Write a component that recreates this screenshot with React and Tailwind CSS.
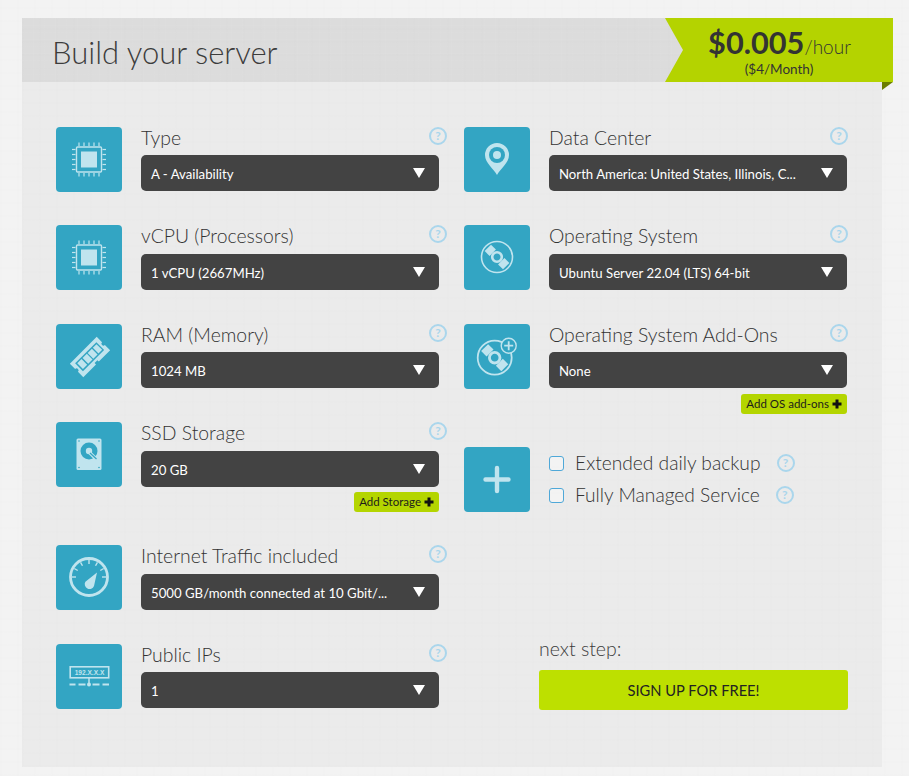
const linen = 'bg-[repeating-linear-gradient(0deg,rgba(255,255,255,0.022)_0_1px,transparent_1px_7px),repeating-linear-gradient(90deg,rgba(255,255,255,0.022)_0_1px,transparent_1px_11px),repeating-linear-gradient(0deg,rgba(0,0,0,0.004)_0_2px,transparent_2px_13px),repeating-linear-gradient(90deg,rgba(0,0,0,0.004)_0_2px,transparent_2px_17px)]'

const LIGHT = '#c0e4ee'
const TILE = '#33a5c3'

function CpuIcon() {
  const ticks = [-10, -5, 0, 5, 10]
  return (
    <>
      {ticks.map((t) => (
        <g key={t} stroke={LIGHT} strokeWidth="1.2">
          <line x1={33 + t} y1="15.5" x2={33 + t} y2="19" />
          <line x1={33 + t} y1="46" x2={33 + t} y2="49.5" />
          <line x1="16" y1={32.5 + t} x2="19.5" y2={32.5 + t} />
          <line x1="46.5" y1={32.5 + t} x2="50" y2={32.5 + t} />
        </g>
      ))}
      <rect x="20.5" y="20" width="25" height="25" rx="1" fill="none" stroke={LIGHT} strokeWidth="1.4" />
      <rect x="25" y="24.5" width="16" height="16" fill={LIGHT} />
    </>
  )
}

function RamIcon() {
  return (
    <g transform="rotate(-45 34 33)">
      <path d="M15 23.5h38v7.5a2 2 0 0 0 0 4v7.5H37v-2h-4v2H15V35a2 2 0 0 0 0-4z" fill={LIGHT} />
      <rect x="19" y="27" width="30" height="11" fill={TILE} />
      <rect x="20.5" y="28.5" width="6" height="8" fill={LIGHT} />
      <rect x="28" y="28.5" width="6" height="8" fill={LIGHT} />
      <rect x="35.2" y="28.5" width="6" height="8" fill={LIGHT} />
      <rect x="42.5" y="28.5" width="5.2" height="8" fill={LIGHT} />
    </g>
  )
}

function HddIcon() {
  return (
    <>
      <rect x="20.5" y="16.5" width="25" height="31.5" rx="1.5" fill={LIGHT} />
      <circle cx="33" cy="29" r="8.5" fill={TILE} />
      <circle cx="33" cy="29" r="3.2" fill={LIGHT} />
      <path d="M34 31l6 6" stroke={LIGHT} strokeWidth="3.4" />
      <path d="M34 31l6.5 6" stroke={TILE} strokeWidth="1.2" />
      <g fill={TILE}>
        <circle cx="23" cy="19" r="0.8" />
        <circle cx="43" cy="19" r="0.8" />
        <circle cx="23" cy="45.5" r="0.8" />
        <circle cx="43" cy="45.5" r="0.8" />
      </g>
    </>
  )
}

function GaugeIcon() {
  const angles = [-90, -60, -30, 0, 30, 60, 90]
  return (
    <>
      <circle cx="33" cy="32" r="18.5" fill="none" stroke={LIGHT} strokeWidth="2.8" />
      {angles.map((a) => (
        <line key={a} x1="33" y1="15" x2="33" y2="19" stroke={LIGHT} strokeWidth="1.4" transform={`rotate(${a} 33 32)`} />
      ))}
      <path d="M41 27.5L38 41a4.8 4.8 0 1 1-8.6-4.2z" fill={LIGHT} />
    </>
  )
}

function IpIcon() {
  return (
    <>
      <rect x="14.2" y="22.8" width="38.5" height="11" fill={TILE} stroke={LIGHT} strokeWidth="1.6" />
      <text x="33.5" y="30.7" textAnchor="middle" fontSize="6.6" fontWeight="700" fill={LIGHT} fontFamily="'Liberation Sans', sans-serif">192.X.X.X</text>
      <line x1="33" y1="34" x2="33" y2="40" stroke={LIGHT} strokeWidth="1.5" />
      <circle cx="33" cy="40.5" r="2" fill={LIGHT} />
      <path d="M13.5 40.5h6M22.5 40.5h7M36.5 40.5h7M46.5 40.5h6.5" stroke={LIGHT} strokeWidth="2" />
    </>
  )
}

function PinIcon() {
  return (
    <>
      <path d="M33 48C30 42 21 36 21 28a12 12 0 0 1 24 0c0 8-9 14-12 20z" fill={LIGHT} />
      <circle cx="33" cy="28" r="8" fill={TILE} />
      <circle cx="33" cy="28" r="4" fill={LIGHT} />
    </>
  )
}

function Disc({ cx, cy, r }) {
  const s = r / 15.5
  return (
    <g transform={`translate(${cx} ${cy}) scale(${s})`}>
      <circle r="15.5" fill="none" stroke={LIGHT} strokeWidth="1.6" />
      <g transform="rotate(-45)">
        <rect x="-4.5" y="-13" width="9" height="7" fill={LIGHT} />
        <rect x="-4.5" y="6" width="9" height="7" fill={LIGHT} />
      </g>
      <circle r="4.8" fill="none" stroke={LIGHT} strokeWidth="2.6" />
    </g>
  )
}

function DiscIcon() {
  return <Disc cx={33} cy={32} r={15.5} />
}

function DiscPlusIcon() {
  return (
    <>
      <Disc cx={30.7} cy={33.7} r={17} />
      <circle cx="44.7" cy="21.7" r="7.5" fill={TILE} stroke={LIGHT} strokeWidth="1.4" />
      <path d="M44.7 17.2v9M40.2 21.7h9" stroke={LIGHT} strokeWidth="1.8" />
    </>
  )
}

function PlusIcon() {
  return <path d="M33 21v23M21.5 32.5h23" stroke={LIGHT} strokeWidth="4.4" strokeLinecap="round" />
}

function Tile({ children }) {
  return (
    <div className="h-[65px] w-[66px] shrink-0 rounded-[4px] bg-[#33a5c3]">
      <svg width="66" height="65" viewBox="0 0 66 65">{children}</svg>
    </div>
  )
}

function Help() {
  return (
    <span className="flex h-[18px] w-[18px] shrink-0 items-center justify-center rounded-full border-2 border-[#aad6ec] text-[12px] font-bold leading-none text-[#aad6ec]">
      ?
    </span>
  )
}

function Row({ icon, label, value, className, labelClass = 'h-[28px]', helpClass = '-mr-2' }) {
  return (
    <div className={`flex gap-[19px] ${className}`}>
      <Tile>{icon}</Tile>
      <div className="w-[298px]">
        <div className={`flex items-start justify-between ${labelClass}`}>
          <span className="text-[19.4px] leading-[22px] text-[#333]">{label}</span>
          <span className={helpClass}><Help /></span>
        </div>
        <div className="flex h-[36px] items-center justify-between rounded-[5px] bg-[#434343] pl-[10px] pr-[14px]">
          <span className="pt-[3px] text-[13.2px] font-normal text-white">{value}</span>
          <span className="h-0 w-0 border-x-[6.5px] border-t-[10px] border-x-transparent border-t-white" />
        </div>
      </div>
    </div>
  )
}

function AddButton({ children }) {
  return (
    <div className="ml-auto flex h-[20px] w-fit items-center gap-[3px] rounded-[3px] bg-[#b4d500] px-[5px] text-[11.5px] font-normal text-[#1c1c1c]">
      {children}
      <svg width="10" height="10" viewBox="0 0 10 10">
        <path d="M5 0.5v9M0.5 5h9" stroke="#111" strokeWidth="3" />
      </svg>
    </div>
  )
}

function CheckRow({ label }) {
  return (
    <div className="flex h-[32px] items-center">
      <span className="h-[15px] w-[15px] rounded-[3px] border border-[#4fa8d8] bg-white/40" />
      <span className="ml-[11px] text-[19.2px] text-[#333]">{label}</span>
      <span className="ml-[16px]"><Help /></span>
    </div>
  )
}

export default function App() {
  return (
    <div className={`min-h-[776px] bg-[#f3f3f3] pl-[22px] pt-[18px] font-['Lato','Liberation_Sans',sans-serif] font-light ${linen}`}>
      <div className={`h-[749px] w-[860px] bg-[#ebebeb] ${linen}`}>
        <header className={`flex h-[64px] items-start justify-between bg-[#dcdcdc] ${linen}`}>
          <h1 className="pl-[30px] pt-[14px] text-[31px] font-light leading-[40px] text-[#3c3c3c]">Build your server</h1>
          <div className="relative -mr-[11px]">
            <div className="flex h-[64px] w-[228px] flex-col items-center bg-[#b4d300] pt-[7px] text-[#333] [clip-path:polygon(0_0,100%_0,100%_100%,0_100%,18px_50%)]">
              <div className="pl-[1px] leading-[36px]">
                <span className="text-[30.7px] font-bold">$0.005</span>
                <span className="text-[19px]">/hour</span>
              </div>
              <div className="-mt-[4px] text-[13.5px] font-normal leading-[15px]">($4/Month)</div>
            </div>
            <div className="absolute right-0 top-[64px] h-[8px] w-[11px] bg-[#6b7d00] [clip-path:polygon(0_0,100%_0,0_100%)]" />
          </div>
        </header>

        <div className="grid grid-cols-[408px_1fr] pl-[34px] pt-[45px]">
          <div>
            <Row className="mb-[33px]" icon={<CpuIcon />} label="Type" value="A - Availability" />
            <Row className="mb-[34px]" labelClass="h-[29px]" icon={<CpuIcon />} label="vCPU (Processors)" value="1 vCPU (2667MHz)" />
            <Row className="mb-[33px]" icon={<RamIcon />} label="RAM (Memory)" value="1024 MB" />
            <Row labelClass="h-[29px]" icon={<HddIcon />} label="SSD Storage" value="20 GB" />
            <div className="mt-[-1px] mb-[33px] w-[383px] pt-[6px]"><AddButton>Add Storage</AddButton></div>
            <Row className="mb-[34px]" labelClass="h-[29px]" icon={<GaugeIcon />} label="Internet Traffic included" value="5000 GB/month connected at 10 Gbit/..." />
            <Row icon={<IpIcon />} label="Public IPs" value="1" />
          </div>

          <div>
            <Row className="mb-[33px]" helpClass="mr-[-1px]" icon={<PinIcon />} label="Data Center" value="North America: United States, Illinois, C..." />
            <Row className="mb-[34px]" labelClass="h-[29px]" helpClass="mr-[-1px]" icon={<DiscIcon />} label="Operating System" value="Ubuntu Server 22.04 (LTS) 64-bit" />
            <Row helpClass="mr-[-1px]" icon={<DiscPlusIcon />} label="Operating System Add-Ons" value="None" />
            <div className="w-[383px] pt-[5px]"><AddButton>Add OS add-ons</AddButton></div>
            <div className="mt-[33px] flex gap-[19px]">
              <Tile><PlusIcon /></Tile>
              <div>
                <CheckRow label="Extended daily backup" />
                <CheckRow label="Fully Managed Service" />
              </div>
            </div>
            <div className="ml-[75px] mt-[124px] w-[309px]">
              <div className="text-[19.5px] leading-[26px] text-[#3c3c3c]">next step:</div>
              <button className="mt-[8px] h-[40px] w-full rounded-[3px] bg-[#bde000] text-[14.7px] font-normal text-[#222]">SIGN UP FOR FREE!</button>
            </div>
          </div>
        </div>
      </div>
    </div>
  )
}
